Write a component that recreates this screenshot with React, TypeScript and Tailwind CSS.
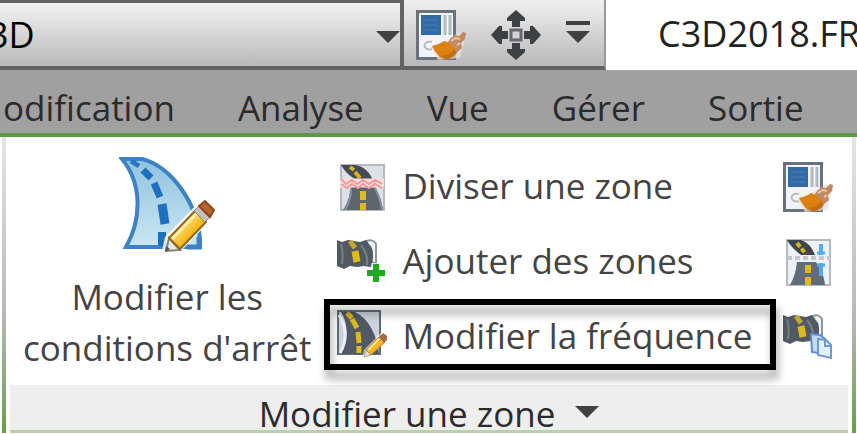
import React from 'react';
import clsx from 'clsx';

const TABS = ['odification', 'Analyse', 'Vue', 'Gérer', 'Sortie'];

const CaretIcon: React.FC<{ className?: string }> = ({ className }) => (
  <svg className={clsx('h-3 w-6 shrink-0', className)} viewBox="0 0 24 12" fill="#404142" aria-hidden="true">
    <path d="M0 0h24L12 12z" />
  </svg>
);

// Property sheet with a pointing hand
const PropertiesIcon: React.FC = () => (
  <svg className="h-[50px] w-[50px] shrink-0" viewBox="0 0 50 50" fill="none" aria-hidden="true">
    <rect x="1.5" y="1.5" width="37" height="47" fill="#f3f4f7" stroke="#68717d" strokeWidth="3" />
    <path d="M5 5h20v20H5z" fill="#336aa5" />
    <path d="M8 10h14M8 15h14M8 20h14" stroke="#4a7db4" strokeWidth="1" />
    <path d="M29 5v20M34 5v20" stroke="#b4bac2" strokeWidth="3" />
    <path d="M16 32a5 4 0 1 0 0 7" stroke="#b9bec6" strokeWidth="2" />
    <path d="M22 50l22-2 6-22-6-4-14 8-16 6z" fill="#e6e2df" opacity="0.7" />
    <path d="M31 33l4-5 4-3 4 1 4-4 3 1-1 6-4 4 1 5-6 5z" fill="#c18a63" />
    <path d="M35 31l5-3 4 1M41 35l3-2" stroke="#e8c4a8" strokeWidth="2" />
    <path d="M16 36c4-1 8-2 12-5 4 1 9 5 12 11-2 4-6 7-10 7-6 0-9-4-14-13z" fill="#dc8110" />
    <path d="M26 45c5 1 9-2 12-6l3 4c-3 4-7 6-11 6-2 0-3-2-4-4z" fill="#b9650f" opacity="0.7" />
  </svg>
);

const MoveIcon: React.FC = () => (
  <svg className="h-[50px] w-[50px] shrink-0" viewBox="0 0 50 50" fill="#3d4044" aria-hidden="true">
    <path d="M25 0l9 8v3h-5v6h-8v-6h-5V8z" />
    <path d="M25 50l9-8v-3h-5v-6h-8v6h-5v3z" />
    <path d="M0 25l8-9h3v5h6v8h-6v5H8z" />
    <path d="M50 25l-8-9h-3v5h-6v8h6v5h3z" />
    <rect x="20" y="20" width="10" height="10" fill="#d4d4d4" stroke="#66686b" strokeWidth="3" />
  </svg>
);

const CorridorIcon: React.FC = () => (
  <svg className="h-24 w-24 shrink-0" viewBox="0 0 96 96" fill="none" aria-hidden="true">
    <defs>
      <linearGradient id="corridor" x1="0" y1="0" x2="0" y2="1">
        <stop offset="0" stopColor="#8fc3df" />
        <stop offset="1" stopColor="#cde6f1" />
      </linearGradient>
      <linearGradient id="pencil" x1="0" y1="0" x2="1" y2="1">
        <stop offset="0.2" stopColor="#fff0a0" />
        <stop offset="0.6" stopColor="#f5b91c" />
        <stop offset="1" stopColor="#b97710" />
      </linearGradient>
    </defs>
    <path d="M3 2h20C52 9 82 49 81 90H7C23 62 23 26 3 2z" fill="url(#corridor)" stroke="#3c82c4" strokeWidth="4" />
    <path d="M12 4l8 5" stroke="#2875bf" strokeWidth="5" />
    <path d="M24 13l8 8M35 26l6 14" stroke="#1e6fbd" strokeWidth="7" />
    <path d="M43 47l3 20" stroke="#1e6fbd" strokeWidth="9" />
    <path d="M43 75v14" stroke="#1e6fbd" strokeWidth="8" />
    <path d="M43 94l3-14 37-38 16 14-36 37-10 3z" fill="#ffffff" opacity="0.85" />
    <path d="M80 80v10H68" stroke="#3c82c4" strokeWidth="5" />
    <path d="M47 94l3-13 11 12z" fill="#e8e8e6" stroke="#85817a" strokeWidth="2" />
    <path d="M50 81l26-27 11 11-26 27z" fill="url(#pencil)" stroke="#94651b" strokeWidth="2" />
    <path d="M53 82l25-26" stroke="#fff0a6" strokeWidth="3" />
    <path d="M75 54l5-5 11 11-5 5z" fill="#c5c1ba" stroke="#89857d" strokeWidth="1" />
    <path d="M80 49l6-5 9 9-4 7z" fill="#b4652f" stroke="#8b481d" strokeWidth="2" />
    <path d="M46 95l5-3-4-3z" fill="#555555" />
  </svg>
);

const SplitRegionIcon: React.FC = () => (
  <svg className="h-12 w-12 shrink-0" viewBox="0 0 48 48" fill="none" aria-hidden="true">
    <rect x="4" y="2" width="43" height="45" fill="#dde0e7" stroke="#b5bac2" strokeWidth="2" />
    <path d="M4 2h15c8 2 14 7 17 16H23C17 16 10 12 4 2z" fill="#444b54" />
    <path d="M13 4l4 3M18 9l5 6" stroke="#d5b321" strokeWidth="4" />
    <path d="M14 24h24c3 7 7 15 8 23H6c4-6 7-14 8-23z" fill="#5c6570" />
    <path d="M8 47c4-6 6-14 6-22M45 47c-1-8-4-16-7-22" stroke="#87909b" strokeWidth="2" />
    <path d="M26 28v9M26 40v7" stroke="#e1b91c" strokeWidth="6" />
    <path d="M3 20h44" stroke="#fbdede" strokeWidth="9" />
    <path d="M4 16l5 5 6-4 5 4 6-4 6 4 6-4 7 4M4 21l6 4 5-4 6 4 5-4 6 4 6-4 7 4" stroke="#f2999c" strokeWidth="2" />
  </svg>
);

const RoadStrip: React.FC = () => (
  <>
    <path d="M28 4c4-3 9-2 11 2v20l-6-3" fill="#f1f2f4" stroke="#8f969f" strokeWidth="2" />
    <path d="M0 2l5 2 6-2 6 1 6 1 6-2 6 8c2 6 1 13-1 19l-7-1-7 1-7-1-6 3-7-3z" fill="#515963" />
    <path d="M4 6c2 6 2 13 1 20M24 7c5 6 7 12 6 20" stroke="#777f89" strokeWidth="2" />
    <path d="M13 3l5 7" stroke="#c4a830" strokeWidth="5" />
    <path d="M18 13l2 11" stroke="#e1b91c" strokeWidth="7" />
  </>
);

const AddRegionIcon: React.FC = () => (
  <svg className="h-12 w-12 shrink-0" viewBox="0 0 48 48" fill="none" aria-hidden="true">
    <RoadStrip />
    <path d="M39 25v19M30 35h18" stroke="#ffffff" strokeWidth="9" opacity="0.7" />
    <path d="M39 26v18M30 35h18" stroke="#1faa22" strokeWidth="6" />
  </svg>
);

const CopyRegionIcon: React.FC = () => (
  <svg className="h-12 w-[50px] shrink-0" viewBox="0 0 50 48" fill="none" aria-hidden="true">
    <RoadStrip />
    <path d="M28 21l9 1 5 4v15l-13-2z" fill="#c6dcf4" stroke="#5f8fca" strokeWidth="2" />
    <path d="M35 26l8 1 5 5v13l-13-3z" fill="#e2effc" stroke="#6d9ad0" strokeWidth="2" />
    <path d="M42 27v6h6" stroke="#6d9ad0" strokeWidth="2" />
  </svg>
);

const FrequencyIcon: React.FC = () => (
  <svg className="h-12 w-[50px] shrink-0 overflow-visible" viewBox="0 3 50 48" fill="none" aria-hidden="true">
    <rect x="1" y="1" width="42" height="43" fill="#cdd3dc" stroke="#626b77" strokeWidth="2" />
    <path d="M4 2h14c14 7 22 23 24 42H4c7-14 8-29 0-42z" fill="#505965" />
    <path d="M2 5c8 13 8 26 1 38" stroke="#eceff2" strokeWidth="3" />
    <path d="M10 3l5 5M15 9l5 9M21 22l1 11M22 36v7" stroke="#dfba1f" strokeWidth="5" />
    <path d="M25 49l2-9 17-17 7 6-17 16z" fill="#ffffff" opacity="0.6" />
    <path d="M27 47l2-7 5 5z" fill="#e5e1d9" stroke="#aaa59b" strokeWidth="1" />
    <path d="M29 40l13-13 6 5-14 13z" fill="#efb42a" stroke="#b48325" strokeWidth="1" />
    <path d="M31 40l11-11" stroke="#ffe68a" strokeWidth="2" />
    <path d="M42 27l4-4 4 3v4l-3 3z" fill="#a46b45" />
  </svg>
);

const MatchRegionIcon: React.FC = () => (
  <svg className="h-12 w-[50px] shrink-0" viewBox="0 0 50 48" fill="none" aria-hidden="true">
    <rect x="4" y="2" width="43" height="45" fill="#edf0f4" stroke="#b5bac2" strokeWidth="2" />
    <path d="M4 2h14c8 3 11 8 14 15H18C13 13 8 9 4 2z" fill="#3f454c" />
    <path d="M14 5l9 11" stroke="#d5b321" strokeWidth="4" strokeDasharray="5 2" />
    <path d="M4 20h43" stroke="#c4c9d0" strokeWidth="4" strokeDasharray="5 3" />
    <path d="M14 24h19c5 7 8 14 9 23H7c4-7 6-14 7-23z" fill="#626c78" />
    <path d="M25 27v8M25 39v8" stroke="#e1b91c" strokeWidth="6" />
    <path d="M38 6v11M38 25v13" stroke="#57a9f1" strokeWidth="4" />
    <path d="M34 15h8M34 27h8" stroke="#57a9f1" strokeWidth="3" />
  </svg>
);

interface RibbonButtonProps {
  icon: React.ReactNode;
  label: string;
  highlighted?: boolean;
}

const RibbonButton: React.FC<RibbonButtonProps> = ({ icon, label, highlighted }) => (
  <button type="button" className="relative flex h-[75px] items-center pr-6 pl-[13px] text-left whitespace-nowrap">
    <span className="flex w-[65px] shrink-0">{icon}</span>
    {label}
    {highlighted && (
      <span className="pointer-events-none absolute inset-x-0 top-0 bottom-1 border-6 border-black drop-shadow-[2px_9px_4px_rgba(0,0,0,0.35)]" />
    )}
  </button>
);

export default function App() {
  return (
    <div className="overflow-hidden bg-white font-['Open_Sans','Noto_Sans',sans-serif] text-[35px] text-[#444444]">
      <header className="flex h-[70px] bg-white">
        <div className="relative w-[404px] shrink-0 border-t-3 border-r-4 border-b-4 border-[#636363] bg-linear-to-b from-[#f3f3f3] to-[#b9b9b9]">
          <select
            aria-label="Espace de travail"
            className="-ml-3 h-full w-full appearance-none text-4xl text-black outline-none"
            defaultValue="3D"
          >
            <option>3D</option>
          </select>
          <CaretIcon className="pointer-events-none absolute top-7 right-0" />
        </div>
        <div className="flex shrink-0 items-center gap-[25px] border-r-2 border-b-4 border-r-[#999999] border-b-[#636363] bg-linear-to-b from-[#f0f0f0] to-[#b9b9b9] pt-1 pr-[14px] pl-3">
          <button type="button" aria-label="Propriétés">
            <PropertiesIcon />
          </button>
          <button type="button" aria-label="Déplacer">
            <MoveIcon />
          </button>
          <button type="button" aria-label="Personnaliser" className="flex flex-col gap-[6px] pb-[6px]">
            <span className="h-1 w-6 bg-[#404142]" />
            <CaretIcon />
          </button>
        </div>
        <h1 className="min-w-0 flex-1 overflow-hidden pl-[52px] text-4xl leading-[68px] whitespace-nowrap text-[#222222]">
          C3D2018.FR
        </h1>
      </header>

      <nav className="flex h-[67px] gap-[63px] border-b-4 border-[#5f9747] bg-[#a0a0a0] pt-3 pl-[3px] whitespace-nowrap text-[#2b2b2b]">
        {TABS.map((tab) => (
          <a key={tab} href="#" className="leading-[51px]">
            {tab}
          </a>
        ))}
      </nav>

      <main className="flex pr-px pl-[2px]">
        <div className="w-1 shrink-0 bg-linear-to-b from-[#e6e6e6] via-[#b8b8b8] via-60% to-[#65a046]" />
        <section className="min-w-0 flex-1 px-1">
          <div className="flex pt-3 pb-[11px]">
            <button type="button" className="flex shrink-0 flex-col items-center px-[13px] pt-2 leading-[51px]">
              <CorridorIcon />
              <span className="pt-[18px]">
                Modifier les
                <br />
                conditions d'arrêt
              </span>
            </button>
            <div className="flex shrink-0 flex-col">
              <RibbonButton icon={<SplitRegionIcon />} label="Diviser une zone" />
              <RibbonButton icon={<AddRegionIcon />} label="Ajouter des zones" />
              <RibbonButton icon={<FrequencyIcon />} label="Modifier la fréquence" highlighted />
            </div>
            <div className="flex shrink-0 flex-col pl-[7px]">
              <button type="button" aria-label="Propriétés de la zone" className="flex h-[75px] items-center">
                <PropertiesIcon />
              </button>
              <button type="button" aria-label="Faire correspondre" className="flex h-[75px] items-center">
                <MatchRegionIcon />
              </button>
              <button type="button" aria-label="Copier la zone" className="flex h-[75px] items-center">
                <CopyRegionIcon />
              </button>
            </div>
          </div>
          <button
            type="button"
            className="flex w-full items-center justify-center gap-5 border-b-3 border-[#b9d2ab] bg-[#eeeeee] pt-[13px] leading-8 text-[#2b2b2b]"
          >
            Modifier une zone
            <CaretIcon className="-mt-1" />
          </button>
        </section>
        <div className="w-1 shrink-0 bg-linear-to-b from-[#e6e6e6] via-[#b8b8b8] via-60% to-[#65a046]" />
      </main>
    </div>
  );
}
